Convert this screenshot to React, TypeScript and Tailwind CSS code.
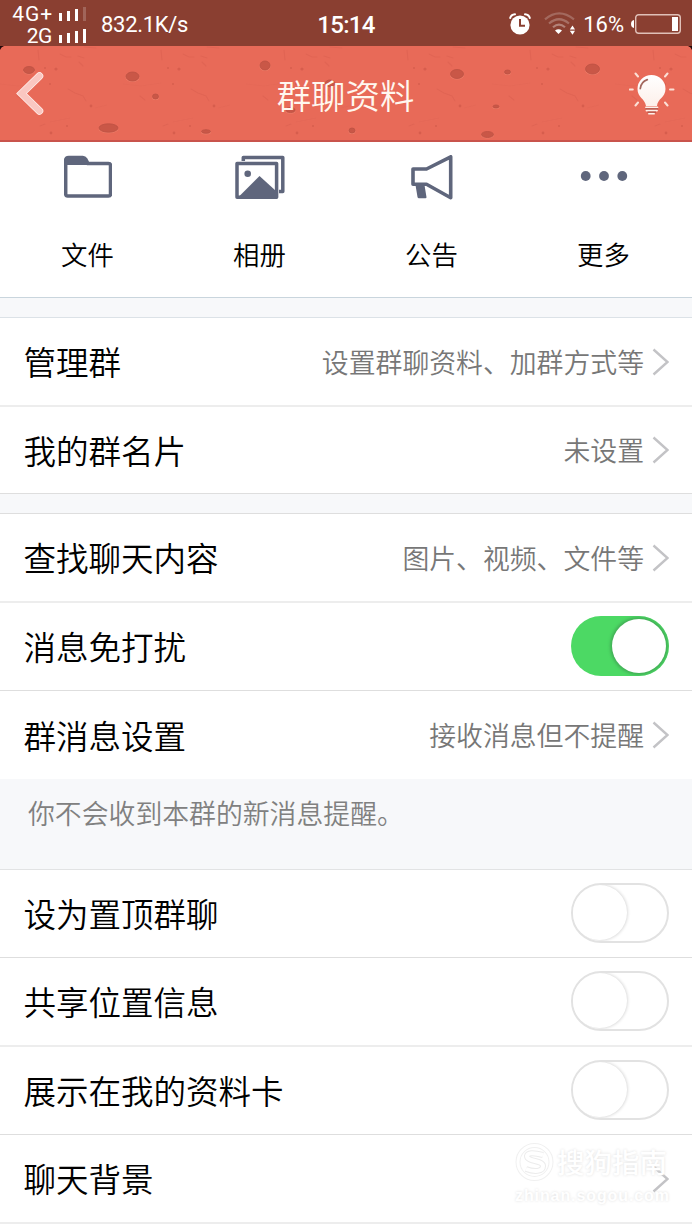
import type { ReactNode } from "react";

const SPOTS: number[][] = [
  [29, 24, 5.5, 3.5], [132.5, 30.5, 6.5, 4.5], [155.5, 50.5, 3, 2.5], [108.5, 82, 9.5, 4.2], [206, 85.5, 4.5, 1.8],
  [265, 19.5, 5, 4.5], [290.5, 64, 4.5, 2.5], [330, 37.5, 5, 3.5], [352, 84.5, 3, 2.5], [457, 28, 6.5, 4.5],
  [507.5, 26, 3, 2], [592.5, 23, 7, 5], [496, 60.5, 3, 1.5], [487.5, 88.5, 6, 3],
];

function Texture() {
  return (
    <svg className="absolute inset-0" width="692" height="96" viewBox="0 0 692 96">
      <defs>
        <pattern id="grain" width="123" height="96" patternUnits="userSpaceOnUse">
          <g fill="none" stroke="#c94f42" strokeWidth="1.2" strokeLinecap="round" opacity=".24">
            <path d="M60 8l6 3 5 0M78 10l6 2M79 16l4 4M38 4l1 10M68 43l7 4 8 3 3 5M84 1l12 1M17 50l5 4M40 80l5-2" />
            <path d="M0 38l18 2 20-3M50 76l20-4M95 62l12-3" opacity=".4" />
          </g>
          <g fill="#b9473a" opacity=".38">
            <circle cx="56" cy="23" r="1.6" />
            <circle cx="50" cy="38" r="1" />
            <circle cx="91" cy="60" r="1.4" />
            <circle cx="51" cy="87" r="1.4" />
            <circle cx="67" cy="80" r="1" />
            <circle cx="45" cy="22" r="1" />
          </g>
        </pattern>
      </defs>
      <rect width="692" height="96" fill="#e86a58" />
      <rect width="692" height="96" fill="url(#grain)" />
      {SPOTS.map(([x, y, rx, ry]) => (
        <g key={`${x}-${y}`}>
          <ellipse cx={x} cy={y + 0.7} rx={rx + 0.5} ry={ry + 0.4} fill="#ed7c68" />
          <ellipse cx={x} cy={y} rx={rx} ry={ry} fill="#c95747" stroke="#bd5042" strokeWidth=".8" />
        </g>
      ))}
      <rect y="94" width="692" height="2" fill="#c9544c" />
      <path d="M0 0h4Q1 1 0 4zM692 0h-4q3 1 4 4z" fill="#24090a" />
    </svg>
  );
}

function Signal({ weakLast }: { weakLast?: boolean }) {
  return (
    <svg width="27" height="14" viewBox="0 0 27 14" fill="#fff">
      <rect x="0" y="6" width="3" height="8" />
      <rect x="8" y="4" width="3" height="10" />
      <rect x="16" y="2" width="3" height="12" />
      <rect x="24" y="0" width="3" height="14" opacity={weakLast ? 0.2 : 1} />
    </svg>
  );
}

function StatusBar() {
  return (
    <div className="grid h-[46px] grid-cols-[260px_172px_260px] bg-[#8a3f31] text-white [font-family:Roboto,'Liberation_Sans',sans-serif]">
      <div className="flex items-center">
        <div className="flex w-[86px] flex-col items-end pt-[3px]">
          <div className="flex h-[22px] items-center gap-[6px]">
            <span className="text-[21px] leading-[22px] tracking-[0.9px]">4G+</span>
            <Signal weakLast />
          </div>
          <div className="flex h-[22px] items-center gap-[7px]">
            <span className="text-[21px] leading-[22px] tracking-[-0.4px]">2G</span>
            <Signal />
          </div>
        </div>
        <span className="ml-[15px] pt-[2px] text-[22px] tracking-[-0.3px]">832.1K/s</span>
      </div>
      <div className="flex items-center justify-center pt-[3px] text-[24px] font-medium tracking-[-0.7px]">15:14</div>
      <div className="flex items-center justify-end pr-[11px]">
        <svg width="22" height="22" viewBox="0 0 22 22">
          <circle cx="11" cy="12" r="9.6" fill="#fff" />
          <path d="M1.2 5Q2 1.5 6 1.2M20.8 5Q20 1.5 16 1.2" fill="none" stroke="#fff" strokeWidth="2" strokeLinecap="round" />
          <path d="M11 6v6.7h5" fill="none" stroke="#8a3f31" strokeWidth="2" />
        </svg>
        <svg className="ml-[13px]" width="31" height="23" viewBox="0 0 31 23" fill="none">
          <g stroke="#fff" strokeWidth="2.2">
            <path d="M1 7.3Q15 -4.500 30 7.300" opacity=".22" />
            <path d="M5 11.500Q15 3 25 11.500" opacity=".25" />
            <path d="M9 15.300Q15 10 21 15.300" opacity=".35" />
          </g>
          <path d="M11 18.500q3.500-2.300 7 0L14.500 22z" fill="#fff" />
          <path d="M25.800 17.500l2.700-4 2.500 4zM25.800 18.800h5.200l-2.500 4z" fill="#fff" />
        </svg>
        <span className="ml-[8px] pt-[2px] text-[22px]">16%</span>
        <svg className="ml-[7px]" width="50" height="20" viewBox="0 0 50 20">
          <rect x="4.700" y=".7" width="44.600" height="18.600" rx="3" fill="none" stroke="#e0c0b8" strokeWidth="1.400" />
          <path d="M3 6v8Q0 13.500 0 10t3-4z" fill="#fff" />
          <rect x="41" y="3" width="6" height="14" fill="#fff" />
        </svg>
      </div>
    </div>
  );
}

function Header() {
  return (
    <header className="relative h-24 overflow-hidden">
      <Texture />
      <div className="relative flex h-full items-center justify-between pl-4 pr-[17px]">
        <svg width="46" height="44" viewBox="0 0 46 44" fill="none" strokeLinecap="round" strokeLinejoin="miter">
          <path d="M23.500 4L5.500 21.500l18 17.500" stroke="#fff0ed" strokeWidth="7.500" />
          <path d="M23.500 4L5.500 21.500l18 17.500" stroke="#fac7c1" strokeWidth="6" />
        </svg>
        <h1 className="pb-px text-[34.4px] font-[350] leading-[50px] text-[#fff7ef]">群聊资料</h1>
        <svg width="46" height="44" viewBox="0 0 46 44">
          <defs>
            <linearGradient id="bulb" x2="0" y2="1">
              <stop offset="0" stopColor="#fff" />
              <stop offset="1" stopColor="#fdf0ea" />
            </linearGradient>
          </defs>
          <path d="M22.500 3a14 14 0 0 0-14 14c0 8.500 7.500 9.500 8.500 17h11c.5-7.500 8.500-8.500 8.500-17a14 14 0 0 0-14-14z" fill="url(#bulb)" />
          <path d="M11.300 16.500q.8-6.500 7-8.800" fill="none" stroke="#a3685e" strokeWidth="1.800" strokeLinecap="round" />
          <path d="M17 35.300h11.500M17.500 38.500h10.500M20 41.700h5" stroke="#fdf0ea" strokeWidth="1.800" strokeLinecap="round" />
          <path d="M16.500 36.900h12.500M18.500 40.100h8.500" stroke="#ad5146" strokeWidth="1.100" />
          <path d="M6.500 1.500l2.500 3M38.500 1.500l-2.500 3M.8 17.500h3M41 17.500h3.500M6.500 33.500l2.500-3M38.500 33.500l-2.500-3" stroke="#fbdfd5" strokeWidth="2" strokeLinecap="round" />
        </svg>
      </div>
    </header>
  );
}

const FolderIcon = (
  <svg width="48" height="48" viewBox="0 0 48 48">
    <path d="M1.700 5.500q0-3 3-3h14q2 0 3 1.700l2.300 4.300H44.500q2 0 2 2v28.500q0 2-2 2H3.700q-2 0-2-2z" fill="none" stroke="#5f667c" strokeWidth="3.500" />
    <path d="M.5 5q0-3 3-3h16q3 2 5 8H.5z" fill="#5f667c" />
  </svg>
);

const AlbumIcon = (
  <svg width="50" height="48" viewBox="0 0 50 48" fill="none" stroke="#5f667c" strokeWidth="3.500" strokeLinejoin="round">
    <path d="M8.300 6V2.400h39.500v34.200H44" />
    <path d="M2 8.500h39.600v33.800H2z" />
    <circle cx="12.700" cy="18.700" r="3.300" fill="#5f667c" stroke="none" />
    <path d="M3.500 42L24.500 21 41 36v6z" fill="#5f667c" stroke="none" />
  </svg>
);

const HornIcon = (
  <svg width="42" height="48" viewBox="0 0 42 48">
    <path d="M2 14h13.500L39.700 1.800v41L15.500 29.300H2z" fill="none" stroke="#5f667c" strokeWidth="3.600" strokeLinejoin="round" />
    <path d="M4.500 30h9l2 12.300q0 1-1 1H8q-1.300 0-1.500-1.300z" fill="#5f667c" />
  </svg>
);

const MoreIcon = (
  <svg width="48" height="48" viewBox="0 0 48 48" fill="#5f667c">
    <circle cx="5.700" cy="21" r="4.900" />
    <circle cx="24" cy="21" r="4.900" />
    <circle cx="42.300" cy="21" r="4.900" />
  </svg>
);

function Tab({ icon, label }: { icon: ReactNode; label: string }) {
  return (
    <div className="flex flex-col items-center pt-[13px]">
      {icon}
      <span className="mt-[31px] text-[26.4px] font-[350] leading-[40px] text-black">{label}</span>
    </div>
  );
}

function Chevron() {
  return (
    <svg width="17" height="28" viewBox="0 0 17 28" fill="none" stroke="#c3c3c6" strokeWidth="2.400">
      <path d="M1.500 1.500L15.500 14 1.500 26.500" />
    </svg>
  );
}

function Toggle({ on }: { on?: boolean }) {
  return on ? (
    <div className="mb-[2px] flex h-[60px] w-[98px] items-center justify-end overflow-hidden rounded-full bg-[#4cd964] pr-[3px]">
      <div className="size-[54px] rounded-full bg-white shadow-[0_0_3px_2px_#43af57]" />
    </div>
  ) : (
    <div className="mb-[2px] h-[60px] w-[98px] overflow-hidden rounded-full border-[2.5px] border-[#e2e2e2] bg-white">
      <div className="-ml-px size-[55px] rounded-full bg-white shadow-[0_0_3px_1px_#dcdcdc]" />
    </div>
  );
}

function Row({ label, value, line, toggle }: { label: string; value?: string; line: string; toggle?: "on" | "off" }) {
  return (
    <div className={`flex items-center justify-between pl-[23.5px] pr-[23px] ${line}`}>
      <span className="pb-px text-[32.5px] font-[350] leading-[48px] text-black">{label}</span>
      {toggle ? (
        <Toggle on={toggle === "on"} />
      ) : (
        <div className="flex items-center gap-[8px]">
          {value && <span className="text-[26.85px] font-[350] leading-[40px] text-[#777]">{value}</span>}
          <Chevron />
        </div>
      )}
    </div>
  );
}

const H89 = "h-[89px] border-b-2 border-[#ededed]";
const H88 = "h-[88px] border-b border-[#dedede]";

function Watermark() {
  return (
    <div className="absolute left-[515px] top-[1141px] flex w-[156px] flex-col text-white [text-shadow:0_0_3px_#dedede]">
      <div className="flex items-center gap-[3px]">
        <svg width="39" height="39" viewBox="0 0 39 39" fill="none">
          <circle cx="19.500" cy="20" r="16.500" stroke="#f0f0f0" strokeWidth="5" />
          <circle cx="19.500" cy="20" r="16.500" stroke="#fff" strokeWidth="3" />
          <path d="M28 13q-15-4-16 1c0 6 16 4 16 10s-9 6-17 3" stroke="#ececec" strokeWidth="6" />
          <path d="M28 13q-15-4-16 1c0 6 16 4 16 10s-9 6-17 3" stroke="#fff" strokeWidth="4" />
        </svg>
        <span className="text-[27.5px] font-medium leading-[40px]">搜狗指南</span>
      </div>
      <span className="text-[16px] font-bold leading-[30px] tracking-[0.9px] [font-family:'Liberation_Sans',sans-serif]">zhinan.sogou.com</span>
    </div>
  );
}

export default function App() {
  return (
    <div className="relative h-[1230px] w-[692px] overflow-hidden bg-white [font-family:'Noto_Sans_CJK_SC',sans-serif]">
      <StatusBar />
      <Header />
      <nav className="grid h-[156px] grid-cols-[172px_172px_172px_172px] border-b border-[#c9d5dd] pl-[1.5px]">
        <Tab icon={FolderIcon} label="文件" />
        <Tab icon={AlbumIcon} label="相册" />
        <Tab icon={HornIcon} label="公告" />
        <Tab icon={MoreIcon} label="更多" />
      </nav>
      <div className="h-[20px] border-b border-[#dce2e7] bg-[#f7f8fa]" />
      <Row label="管理群" value="设置群聊资料、加群方式等" line={H89} />
      <Row label="我的群名片" value="未设置" line="h-[87px] border-b border-[#dedede]" />
      <div className="h-[20px] border-b border-[#dedede] bg-[#f7f8fa]" />
      <Row label="查找聊天内容" value="图片、视频、文件等" line={H89} />
      <Row label="消息免打扰" toggle="on" line={H88} />
      <Row label="群消息设置" value="接收消息但不提醒" line="h-[88px]" />
      <div className="h-[91px] border-b border-[#e2e3e4] bg-[#f7f8fa] pl-7 pt-[14px] text-[26.85px] font-[350] leading-[40px] text-[#808080]">
        你不会收到本群的新消息提醒。
      </div>
      <Row label="设为置顶群聊" toggle="off" line={H88} />
      <Row label="共享位置信息" toggle="off" line={H89} />
      <Row label="展示在我的资料卡" toggle="off" line={H88} />
      <Row label="聊天背景" line={H89} />
      <Watermark />
    </div>
  );
}
